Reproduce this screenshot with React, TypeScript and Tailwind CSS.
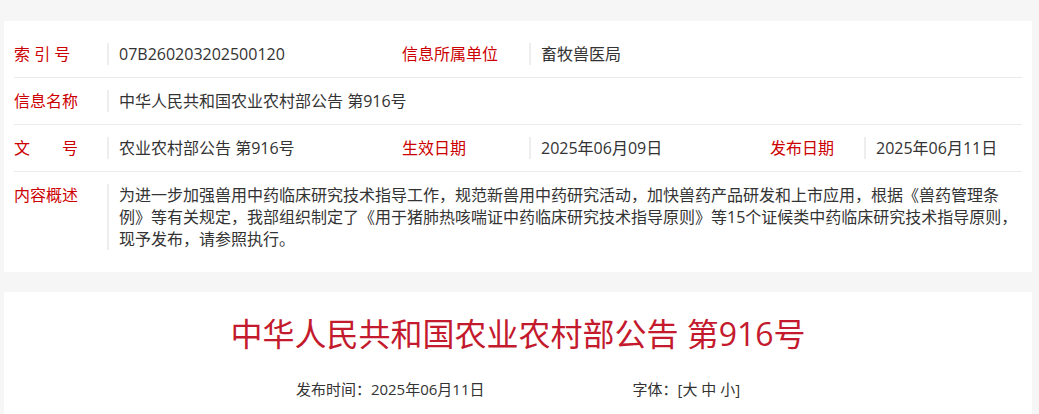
const font = { fontFamily: '"Open Sans", "Noto Sans CJK SC", sans-serif' };

type Cell = { label: string; value: string; labelW: string; valueW: string };

const rowOne: Cell[] = [
  { label: "索 引 号", value: "07B260203202500120", labelW: "w-[93px]", valueW: "w-[295px]" },
  { label: "信息所属单位", value: "畜牧兽医局", labelW: "w-[127px]", valueW: "flex-1" },
];

const rowThree: Cell[] = [
  { label: "文　　号", value: "农业农村部公告 第916号", labelW: "w-[93px]", valueW: "w-[295px]" },
  { label: "生效日期", value: "2025年06月09日", labelW: "w-[127px]", valueW: "w-[241px]" },
  { label: "发布日期", value: "2025年06月11日", labelW: "w-[94px]", valueW: "flex-1" },
];

function InfoRow({ cells }: { cells: Cell[] }) {
  return (
    <div className="flex items-start py-3 border-b border-[#ebebeb]">
      {cells.map((c) => (
        <div key={c.label} className="contents">
          <div className={`${c.labelW} shrink-0 text-[#cc0000] whitespace-pre`}>{c.label}</div>
          <div className={`${c.valueW} border-l-2 border-[#eeeeee] pl-[10px] text-[#333]`}>
            {c.value}
          </div>
        </div>
      ))}
    </div>
  );
}

export default function App() {
  return (
    <div className="min-h-[414px] bg-[#f6f6f6] pt-[21px] pl-[4px] pr-[7px] text-[16px] leading-[22px]" style={font}>
      {/* Info table */}
      <div className="bg-white px-[10px] pt-[10px] pb-[10px]">
        <InfoRow cells={rowOne} />
        <InfoRow
          cells={[{ label: "信息名称", value: "中华人民共和国农业农村部公告 第916号", labelW: "w-[93px]", valueW: "flex-1" }]}
        />
        <InfoRow cells={rowThree} />
        <div className="flex items-start py-3">
          <div className="w-[93px] shrink-0 text-[#cc0000]">内容概述</div>
          <div className="flex-1 border-l-2 border-[#eeeeee] pl-[10px] text-[#333]">
            为进一步加强兽用中药临床研究技术指导工作，规范新兽用中药研究活动，加快兽药产品研发和上市应用，根据《兽药管理条
            <br />
            例》等有关规定，我部组织制定了《用于猪肺热咳喘证中药临床研究技术指导原则》等15个证候类中药临床研究技术指导原则，
            <br />
            现予发布，请参照执行。
          </div>
        </div>
      </div>

      {/* Article header */}
      <div className="mt-[20px] bg-white pt-[18px] pb-6">
        <h1 className="text-center text-[32px] leading-[48px] text-[#c41a2e]">
          中华人民共和国农业农村部公告 第916号
        </h1>
        <div className="mt-[20px] flex justify-center gap-[148px] text-[15px] leading-[22px] text-[#333]">
          <span>发布时间：2025年06月11日</span>
          <span>字体：[大 中 小]</span>
        </div>
      </div>
    </div>
  );
}
